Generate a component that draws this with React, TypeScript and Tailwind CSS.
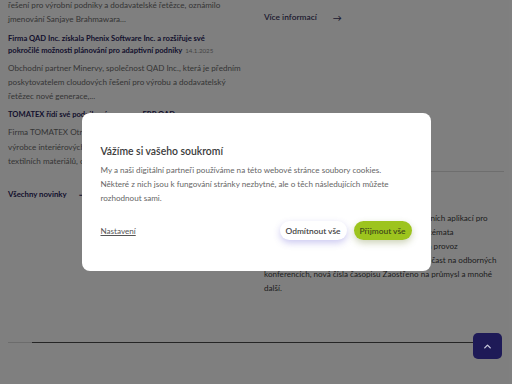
import { ChevronUp } from "lucide-react";

const Lines = ({ lines, className }: { lines: string[]; className: string }) => (
  <p className={className}>
    {lines.map((l) => (
      <span key={l} className="block whitespace-nowrap">
        {l}
      </span>
    ))}
  </p>
);

const News = ({ title, date, body }: { title: string[]; date: string; body: string[] }) => (
  <div>
    <h3 className="mt-[5px] text-[7.6px] leading-[12px] font-bold text-[#28235a]">
      {title.map((t, i) => (
        <span key={t} className="block whitespace-nowrap">
          {t}
          {i === title.length - 1 && <span className="ml-[3px] text-[6.2px] font-normal text-[#8a8a8a]">{date}</span>}
        </span>
      ))}
    </h3>
    <Lines lines={body} className="mt-[4px] text-[8.1px] leading-[14.3px] text-[#6b6b6b]" />
  </div>
);

export default function App() {
  return (
    <div className="relative w-[512px] h-[384px] overflow-hidden bg-white font-['Lato',sans-serif]">
      <div className="flex gap-[14px] px-2">
        <div className="w-[242px] shrink-0">
          <Lines
            className="-mt-[2px] text-[8.1px] leading-[14.3px] text-[#6b6b6b]"
            lines={["řešení pro výrobní podniky a dodavatelské řetězce, oznámilo", "jmenování Sanjaye Brahmawara..."]}
          />
          <News
            title={["Firma QAD Inc. získala Phenix Software Inc. a rozšiřuje své", "pokročilé možnosti plánování pro adaptivní podniky"]}
            date="14.1.2025"
            body={[
              "Obchodní partner Minervy, společnost QAD Inc., která je předním",
              "poskytovatelem cloudových řešení pro výrobu a dodavatelský",
              "řetězec nové generace,...",
            ]}
          />
          <News
            title={["TOMATEX řídí své podnikové procesy s ERP QAD"]}
            date="13.1.2025"
            body={[
              "Firma TOMATEX Otrokovice, tradiční český výrobce a dodavatel",
              "výrobce interiérových a technických textilií, netkaných a",
              "textilních materiálů, ohlásil úspěšné spuštění systému...",
            ]}
          />
          <div className="mt-[20px] flex items-center gap-3 text-[7.8px] font-bold text-[#28235a]">
            <span>Všechny novinky</span>
            <span className="text-[9px]">→</span>
          </div>
        </div>
        <div className="flex-1">
          <div className="mt-[11px] flex items-center gap-4 text-[8.4px] font-semibold text-[#3a3560]">
            <span>Více informací</span>
            <span className="text-[9px]">→</span>
          </div>
          <div className="mt-[146px] border-t border-[#dcdcdc]" />
          <Lines
            className="mt-[39px] text-[8.1px] leading-[14px] text-[#3d3d3d]"
            lines={[
              "Pravidelně pořádáme webináře o využití moderních aplikací pro",
              "výrobní podniky, odborné semináře a kurzy na témata",
              "digitalizace výroby, implementace ERP, správa a provoz",
              "informačních systémů ve výrobě, a pravidelná účast na odborných",
              "konferencích, nová čísla časopisu Zaostřeno na průmysl a mnohé",
              "další.",
            ]}
          />
        </div>
      </div>

      <div className="mt-[47px] ml-2 mr-[38px] flex items-center">
        <div className="h-px w-6 bg-[#d8d8d8]" />
        <div className="h-px flex-1 bg-[#4a4a4a]" />
      </div>

      <div className="absolute inset-0 bg-black/50 flex items-center justify-center">
        <div className="w-[349px] rounded-lg bg-white px-[19px] pt-[31px] pb-[31px]">
          <h2 className="text-[10.4px] leading-[14px] font-semibold text-[#3b3b3b]">Vážíme si vašeho soukromí</h2>
          <p className="mt-[5px] text-[8.1px] leading-[14.3px] text-[#666]">
            My a naši digitální partneři používáme na této webové stránce soubory cookies. Některé z nich jsou k fungování stránky nezbytné, ale o těch následujících můžete rozhodnout sami.
          </p>
          <div className="mt-[16px] flex items-center">
            <span className="text-[8.1px] text-[#555] underline">Nastavení</span>
            <button className="ml-auto h-[19px] w-[67px] rounded-full bg-white text-[8.4px] font-semibold text-[#444] shadow-[0_3px_7px_rgba(90,80,210,0.3)]">
              Odmítnout vše
            </button>
            <button className="ml-[7px] h-[19px] w-[58px] rounded-full bg-[#9dc41e] text-[8.4px] font-semibold text-[#3f4a1a] shadow-[0_3px_7px_rgba(90,110,20,0.3)]">
              Přijmout vše
            </button>
          </div>
        </div>
      </div>

      <div className="absolute left-[473px] top-[333px] flex h-[26px] w-[29px] items-center justify-center rounded-[5px] bg-[#1e1a57]">
        <ChevronUp size={11} strokeWidth={3} className="text-[#c8c8dc]" />
      </div>
    </div>
  );
}
